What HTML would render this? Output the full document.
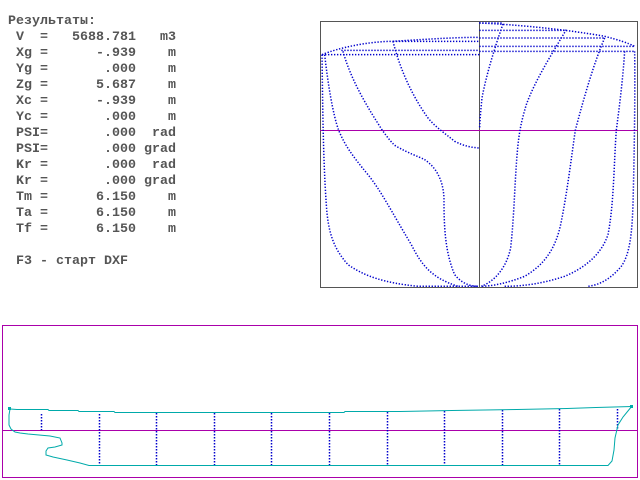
<!DOCTYPE html>
<html><head><meta charset="utf-8"><style>
html,body{margin:0;padding:0;background:#fff;width:640px;height:480px;overflow:hidden}
pre{position:absolute;left:0;top:14px;margin:0;font-family:"Liberation Mono","DejaVu Sans Mono",monospace;font-size:13.33px;line-height:16px;color:#555;font-weight:bold}
svg{position:absolute;left:0;top:0}
</style></head><body>
<pre> Результаты:
  V  =   5688.781   m3
  Xg =      -.939    m
  Yg =       .000    m
  Zg =      5.687    m
  Xc =      -.939    m
  Yc =       .000    m
  PSI=       .000  rad
  PSI=       .000 grad
  Kr =       .000  rad
  Kr =       .000 grad
  Tm =      6.150    m
  Ta =      6.150    m
  Tf =      6.150    m

  F3 - старт DXF</pre>
<svg width="640" height="480" viewBox="0 0 640 480">
<rect x="320.5" y="21.5" width="317" height="266" fill="none" stroke="#555" stroke-width="1"/>
<line x1="479.5" y1="22" x2="479.5" y2="287" stroke="#555"/>
<line x1="320" y1="130.5" x2="638" y2="130.5" stroke="#a0a" stroke-width="1"/>
<g transform="translate(318,18) scale(0.3333)" fill="none" stroke="#00c" stroke-width="4.5" stroke-dasharray="4 5">
<path d="M12,110 C14,250 15,420 25,560 C30,640 45,690 90,740 C140,775 200,795 300,805 L480,805"/>
<path d="M20,110 C30,200 45,290 62,337 C80,380 100,410 150,470 C190,520 220,580 280,680 C310,740 340,780 420,805"/>
<path d="M75,100 C100,190 150,270 193,337 C210,360 225,380 235,385 C270,405 300,415 320,425 C350,445 375,480 378,540 C378,620 380,700 410,770 C430,795 455,805 480,805"/>
<path d="M225,70 C245,150 280,230 330,300 C355,330 380,345 410,370 C440,385 460,388 482,390"/>
<path d="M12,110 C60,90 150,70 225,70 C350,62 420,58 484,58"/>
<path d="M12,110 L484,110 M70,97 L484,97 M225,70 L484,70"/>
<path d="M555,18 C530,90 505,170 492,240 C487,290 485,320 485,330"/>
<path d="M745,35 C700,110 650,190 625,260 C610,310 605,337 600,380 C590,480 590,580 578,690 C565,750 530,790 490,805"/>
<path d="M860,60 C830,130 800,230 772,337 C760,420 748,520 730,610 C715,690 680,740 620,775 C570,795 520,805 490,805"/>
<path d="M920,100 C915,180 905,260 895,337 C888,430 888,560 870,650 C850,710 800,750 740,775 C680,795 620,805 560,805"/>
<path d="M950,100 C952,250 948,450 945,560 C942,650 935,710 910,745 C880,780 850,800 810,805"/>
<path d="M484,15 L555,15 M484,37 L745,37 M484,60 L860,60 M484,85 L950,85 M484,100 L950,100"/>
<path d="M484,15 C600,20 750,35 860,55 C900,65 930,75 950,85"/>
</g>
<rect x="2.5" y="325.5" width="635" height="152" fill="none" stroke="#a0a" stroke-width="1"/>
<line x1="2" y1="430.5" x2="638" y2="430.5" stroke="#a0a"/>
<g stroke="#00c" stroke-width="1.5" stroke-dasharray="1.5 1.5">
<line x1="41.5" y1="414" x2="41.5" y2="430"/>
<line x1="99.5" y1="414" x2="99.5" y2="465"/>
<line x1="156.5" y1="413" x2="156.5" y2="465"/>
<line x1="214.5" y1="413" x2="214.5" y2="465"/>
<line x1="271.5" y1="413" x2="271.5" y2="465"/>
<line x1="329.5" y1="413" x2="329.5" y2="465"/>
<line x1="387.5" y1="412" x2="387.5" y2="465"/>
<line x1="444.5" y1="411" x2="444.5" y2="465"/>
<line x1="502.5" y1="410" x2="502.5" y2="465"/>
<line x1="559.5" y1="409" x2="559.5" y2="465"/>
<line x1="617.5" y1="409" x2="617.5" y2="430"/>
</g>
<g fill="none" stroke="#0aa" stroke-width="1">
<polyline points="10,409 17,409.5 48,409.5 49,410.5 78,410.5 79,411.5 114,411.5 115,412.5 344,412.5 345,411.5 400,411.5 452,410.5 517,409.5 567,408.5 596,407.5 632,406.5"/>
<polyline points="10,409 9,415 9,425 11,429 15,432 20,433 28,434 50,436 60,438 62,443 62,445 55,447 48,448 46,451 46,455 53,457 67,460 80,463 89,465.5 608,465.5 612,461 614,450 615,438 618,425 623,417 632,406"/>
</g>
<rect x="8" y="407" width="3" height="3" fill="#0aa"/>
<rect x="630" y="405" width="3" height="3" fill="#0aa"/>
</svg>
</body></html>
